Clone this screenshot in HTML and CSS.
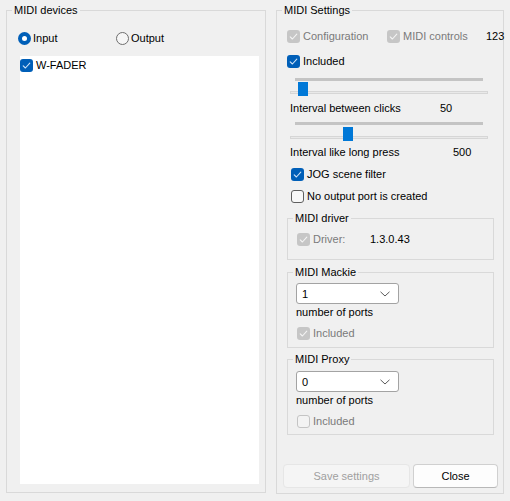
FILE: index.html
```html
<!DOCTYPE html>
<html>
<head>
<meta charset="utf-8">
<link rel="stylesheet" href="styles.css">
</head>
<body>
<div class="dialog">
  <fieldset class="group devices">
    <legend>MIDI devices</legend>
    <div class="gbody devices-body">
      <div class="radio-row">
        <div class="radio on input"><span class="dot"></span>Input</div>
        <div class="radio"><span class="dot"></span>Output</div>
      </div>
      <div class="list">
        <div class="check on item"><span class="box"><svg viewBox="0 0 13 13" width="13" height="13"><polyline points="3.2,6.8 5.4,9 9.8,4.2" /></svg></span>W-FADER</div>
      </div>
    </div>
  </fieldset>

  <fieldset class="group settings">
    <legend>MIDI Settings</legend>
    <div class="gbody settings-body">
      <div class="row first">
        <div class="check dis on w-config"><span class="box"><svg viewBox="0 0 13 13" width="13" height="13"><polyline points="3.2,6.8 5.4,9 9.8,4.2" /></svg></span>Configuration</div>
        <div class="check dis on w-controls"><span class="box"><svg viewBox="0 0 13 13" width="13" height="13"><polyline points="3.2,6.8 5.4,9 9.8,4.2" /></svg></span>MIDI controls</div>
        <span class="num">123</span>
      </div>
      <div class="row check on included"><span class="box"><svg viewBox="0 0 13 13" width="13" height="13"><polyline points="3.2,6.8 5.4,9 9.8,4.2" /></svg></span>Included</div>

      <div class="slider s1">
        <div class="track"></div>
        <div class="rail"></div>
        <div class="thumb" style="left: 11px"></div>
      </div>
      <div class="row value-row v1"><span class="vlabel w1">Interval between clicks</span><span>50</span></div>

      <div class="slider s2">
        <div class="track"></div>
        <div class="rail"></div>
        <div class="thumb" style="left: 56px"></div>
      </div>
      <div class="row value-row v2"><span class="vlabel w2">Interval like long press</span><span>500</span></div>

      <div class="row check on jog"><span class="box"><svg viewBox="0 0 13 13" width="13" height="13"><polyline points="3.2,6.8 5.4,9 9.8,4.2" /></svg></span>JOG scene filter</div>
      <div class="row check nooutput"><span class="box"></span>No output port is created</div>

      <fieldset class="group sub driver">
        <legend>MIDI driver</legend>
        <div class="gbody sub-body">
          <div class="row check dis on drv"><span class="box"><svg viewBox="0 0 13 13" width="13" height="13"><polyline points="3.2,6.8 5.4,9 9.8,4.2" /></svg></span><span class="drv-label">Driver:</span><span class="ver">1.3.0.43</span></div>
        </div>
      </fieldset>

      <fieldset class="group sub mackie">
        <legend>MIDI Mackie</legend>
        <div class="gbody sub-body">
          <div class="combo c-mackie"><span>1</span><svg class="chev" viewBox="0 0 10 6" width="10" height="6"><polyline points="0.5,0.8 5,5 9.5,0.8" /></svg></div>
          <div class="row ports">number of ports</div>
          <div class="row check dis on sub-inc"><span class="box"><svg viewBox="0 0 13 13" width="13" height="13"><polyline points="3.2,6.8 5.4,9 9.8,4.2" /></svg></span>Included</div>
        </div>
      </fieldset>

      <fieldset class="group sub proxy">
        <legend>MIDI Proxy</legend>
        <div class="gbody sub-body">
          <div class="combo c-proxy"><span>0</span><svg class="chev" viewBox="0 0 10 6" width="10" height="6"><polyline points="0.5,0.8 5,5 9.5,0.8" /></svg></div>
          <div class="row ports">number of ports</div>
          <div class="row check dis sub-inc"><span class="box"></span>Included</div>
        </div>
      </fieldset>

      <div class="buttons">
        <div class="btn disabled save">Save settings</div>
        <div class="btn close">Close</div>
      </div>
    </div>
  </fieldset>
</div>
</body>
</html>
```

FILE: styles.css
```css
html, body {
  margin: 0;
  padding: 0;
}
body {
  background: #f0f0f0;
  font-family: "Liberation Sans", Arial, sans-serif;
  font-size: 11px;
  line-height: 16px;
  color: #000;
  width: 510px;
  height: 501px;
  overflow: hidden;
}
.dialog {
  display: flex;
  align-items: flex-start;
  gap: 10px;
  padding: 2px 0 0 6px;
}
.group {
  margin: 0;
  padding: 0;
  min-width: 0;
  border: 1px solid #d9d9d9;
  box-sizing: border-box;
}
.group > legend {
  margin-left: 5px;
  padding: 0 2px;
  line-height: 16px;
  font-size: 11px;
}
.devices {
  width: 260px;
  height: 491px;
}
.devices-body {
  padding: 0 6px 0 13px;
}
.radio-row {
  display: flex;
  margin: 12px 0 0 -2px;
  height: 16px;
}
.radio {
  display: flex;
  align-items: center;
  gap: 2px;
  height: 16px;
}
.radio.input {
  width: 98px;
}
.radio .dot {
  width: 13px;
  height: 13px;
  box-sizing: border-box;
  border-radius: 50%;
  border: 1px solid #6e6e6e;
  background: #f6f6f6;
  flex: none;
  display: flex;
  align-items: center;
  justify-content: center;
}
.radio.on .dot {
  border: none;
  background: #005fb8;
}
.radio.on .dot::after {
  content: "";
  width: 5px;
  height: 5px;
  border-radius: 50%;
  background: #fff;
}
.list {
  margin-top: 10px;
  height: 428px;
  background: #fff;
}
.item {
  padding-top: 1px;
  gap: 4px;
}

.check {
  display: flex;
  align-items: center;
  gap: 3px;
  height: 16px;
  white-space: nowrap;
}
.check .box {
  width: 13px;
  height: 13px;
  box-sizing: border-box;
  border-radius: 3px;
  border: 1px solid #5f5f5f;
  background: #f8f8f8;
  flex: none;
  display: block;
}
.check .box svg {
  display: block;
  margin: -1px;
}
.check .box polyline {
  fill: none;
  stroke: #fff;
  stroke-width: 1.1;
  stroke-linecap: round;
  stroke-linejoin: round;
}
.check.on .box {
  border: none;
  background: #005fb8;
}
.check.on .box svg {
  margin: 0;
}
.check.on .box polyline {
  stroke: #cfe3f7;
}
.check.dis {
  color: #7a7a7a;
}
.check.dis .box {
  border: 1px solid #c4c4c4;
  background: #f3f3f3;
}
.check.dis.on .box {
  border: none;
  background: #c6c6c6;
}
.check.dis.on .box polyline {
  stroke: #f4f4f4;
}

.settings {
  width: 228px;
  height: 492px;
}
.settings-body {
  padding: 0 9px 0 10px;
}
.row {
  height: 16px;
}
.row.first {
  display: flex;
  align-items: center;
  margin-top: 10px;
}
.w-config {
  width: 100px;
  flex: none;
}
.w-controls {
  width: 99px;
  flex: none;
}
.num {
  white-space: nowrap;
}
.included {
  margin-top: 9px;
}
.slider {
  position: relative;
  height: 16px;
}
.slider.s1 {
  margin-top: 9px;
}
.slider.s2 {
  margin-top: 6px;
}
.slider .track {
  height: 3px;
  margin: 0 11px 0 8px;
  background: #c4c4c4;
}
.slider .rail {
  height: 3px;
  box-sizing: border-box;
  margin: 10px 6px 0 3px;
  border: 1px solid #d6d6d6;
  background: #e9e9e9;
}
.slider.s2 .rail {
  margin-top: 11px;
}
.slider .thumb {
  position: absolute;
  top: 4px;
  width: 10px;
  height: 14px;
  background: #0078d7;
}
.slider.s2 .thumb {
  top: 5px;
}
.value-row {
  display: flex;
  margin-left: 3px;
  white-space: nowrap;
}
.v1 {
  margin-top: 6px;
}
.v2 {
  margin-top: 6px;
}
.w1 {
  width: 150px;
  flex: none;
}
.w2 {
  width: 163px;
  flex: none;
}
.jog {
  margin-top: 6px;
  margin-left: 4px;
}
.nooutput {
  margin-top: 6px;
  margin-left: 4px;
}
.sub {
  width: 207px;
}
.sub-body {
  padding: 0 8px 0 9px;
}
.driver {
  margin-top: 6px;
  height: 50px;
}
.drv {
  margin-top: 5px;
}
.drv-label {
  width: 54px;
  flex: none;
}
.ver {
  color: #000;
}
.mackie {
  margin-top: 4px;
  height: 84px;
}
.proxy {
  margin-top: 3px;
  height: 84px;
}
.combo {
  width: 103px;
  height: 21px;
  box-sizing: border-box;
  margin-left: -1px;
  border: 1px solid #a3a3a3;
  border-radius: 3px;
  background: #fff;
  display: flex;
  align-items: center;
  justify-content: space-between;
  padding: 0 8px 0 5px;
}
.c-mackie {
  margin-top: 3px;
}
.c-proxy {
  margin-top: 4px;
}
.chev polyline {
  fill: none;
  stroke: #5a5a5a;
  stroke-width: 1;
}
.ports {
  margin-left: -1px;
}
.sub-inc {
  margin-top: 5px;
}
.buttons {
  display: flex;
  gap: 3px;
  margin: 29px -4px 0 -4px;
}
.btn {
  height: 24px;
  box-sizing: border-box;
  border-radius: 4px;
  display: flex;
  align-items: center;
  justify-content: center;
}
.save {
  width: 127px;
  background: #f5f5f5;
  border: 1px solid #e6e6e6;
  color: #a0a0a0;
}
.close {
  width: 85px;
  background: #fdfdfd;
  border: 1px solid #d0d0d0;
  border-bottom-color: #b8b8b8;
}
```
